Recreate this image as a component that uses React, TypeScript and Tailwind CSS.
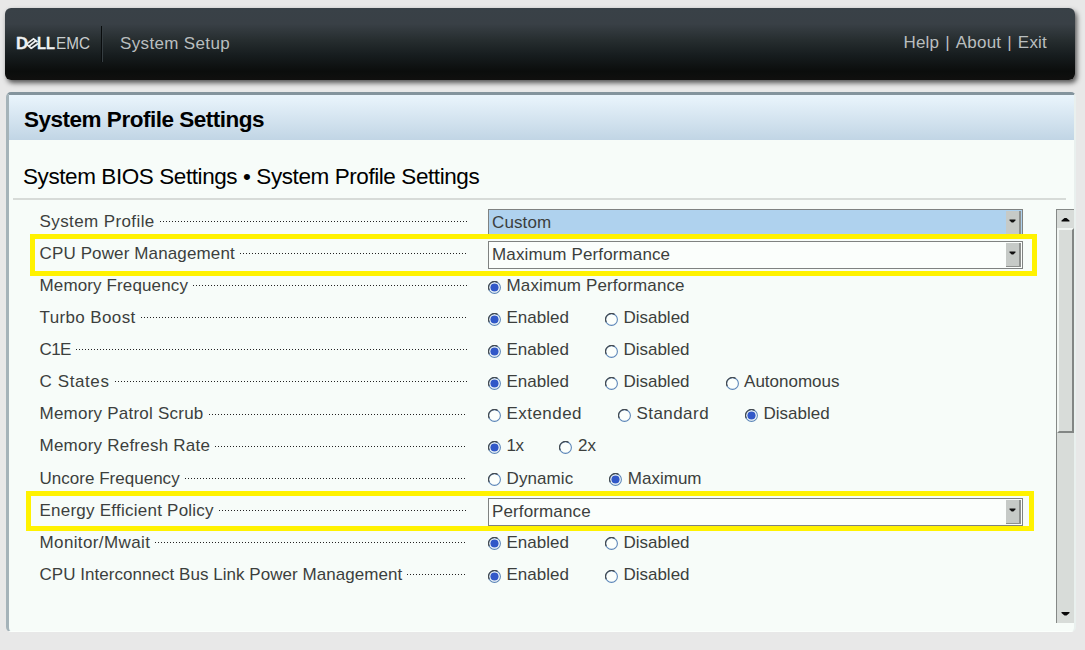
import React from "react";

type Option = { label: string; selected?: boolean; tracking?: string };
type Setting = { label: string; tracking?: string; value?: string; active?: boolean; options?: Option[] };

const on = (label: string, tracking = "tracking-[0px]"): Option => ({ label, selected: true, tracking });
const off = (label: string, tracking = "tracking-[0px]"): Option => ({ label, tracking });

const settings: Setting[] = [
  { label: "System Profile", tracking: "tracking-[0.4px]", value: "Custom", active: true },
  { label: "CPU Power Management", value: "Maximum Performance" },
  { label: "Memory Frequency", options: [on("Maximum Performance", "tracking-[0.13px]")] },
  { label: "Turbo Boost", tracking: "tracking-[0.38px]", options: [on("Enabled"), off("Disabled")] },
  { label: "C1E", tracking: "tracking-[-0.6px]", options: [on("Enabled"), off("Disabled")] },
  { label: "C States", tracking: "tracking-[0.6px]", options: [on("Enabled"), off("Disabled"), off("Autonomous")] },
  {
    label: "Memory Patrol Scrub",
    tracking: "tracking-[0.23px]",
    options: [off("Extended", "tracking-[0.45px]"), off("Standard", "tracking-[0.45px]"), on("Disabled")],
  },
  { label: "Memory Refresh Rate", tracking: "tracking-[0.23px]", options: [on("1x", "tracking-[-0.5px]"), off("2x")] },
  { label: "Uncore Frequency", tracking: "tracking-[0.02px]", options: [off("Dynamic", "tracking-[0.1px]"), on("Maximum")] },
  { label: "Energy Efficient Policy", tracking: "tracking-[0.24px]", value: "Performance" },
  { label: "Monitor/Mwait", tracking: "tracking-[0.38px]", options: [on("Enabled"), off("Disabled")] },
  {
    label: "CPU Interconnect Bus Link Power Management",
    tracking: "tracking-[0.04px]",
    options: [on("Enabled"), off("Disabled")],
  },
];

function Radio({ selected }: { selected?: boolean }) {
  return (
    <svg width="13" height="13" viewBox="0 0 13 13" className="mt-[3px] shrink-0">
      <circle cx="6.5" cy="6.5" r="5.9" fill="#fcfffc" stroke="#5c86b8" strokeWidth="1.1" />
      <path d="M1.3 9.2A5.9 5.9 0 0 1 9.6 1.4" fill="none" stroke="#454b50" strokeWidth="1.2" />
      {selected && <circle cx="6.5" cy="6.5" r="4.1" fill="#3158c8" />}
    </svg>
  );
}

function Select({ value, active }: { value: string; active?: boolean }) {
  return (
    <div className={"flex h-7 w-[535px] border border-[#7f8281] p-px " + (active ? "bg-[#afd2ee]" : "bg-[#fbfefc]")}>
      <span className="flex-1 pl-[2px] leading-[24px]">{value}</span>
      <span className="flex h-6 w-[15px] justify-center border-r-2 border-b border-[#8d908e] bg-[#c6cac7] pt-2">
        <svg width="7" height="5" viewBox="0 0 7 5">
          <path d="M0.5 0.5h6v1L4.3 3.5h-1.6L0.5 1.5z" fill="#111" />
        </svg>
      </span>
    </div>
  );
}

function SettingRow({ label, tracking, value, active, options }: Setting) {
  return (
    <div className="flex h-[32.1px] items-start">
      <div className="flex h-[25px] w-[428px] items-center pl-[0.5px]">
        <span className={"whitespace-nowrap " + (tracking ?? "")}>{label}</span>
        <span className="ml-[5px] h-px flex-1 bg-[repeating-linear-gradient(90deg,#222_0_1px,transparent_1px_3px)]" />
      </div>
      <div className="ml-[21px]">
        {value ? (
          <Select value={value} active={active} />
        ) : (
          <div className="flex h-[25px] items-center gap-[36px]">
            {options?.map((o) => (
              <span key={o.label} className={"flex items-center gap-[5.5px] whitespace-nowrap " + (o.tracking ?? "")}>
                <Radio selected={o.selected} />
                {o.label}
              </span>
            ))}
          </div>
        )}
      </div>
    </div>
  );
}

function Logo() {
  return (
    <svg width="75" height="20" viewBox="0 -3 75 20" fontFamily="Liberation Sans, sans-serif" fill="#eef1f1" className="tracking-normal">
      <text x="0" y="12" fontSize="16" fontWeight="700" textLength="12" lengthAdjust="spacingAndGlyphs" stroke="#eef1f1" strokeWidth=".3">D</text>
      <path d="M10.5 7.2 17.5 1.8 21.5 5M13 9.2 19.5 4M15 11.5 22 6.5M10.5 7.2 15.5 11.5" stroke="#eef1f1" strokeWidth="1.7" fill="none" />
      <text x="21" y="12" fontSize="16" fontWeight="700" textLength="18" lengthAdjust="spacingAndGlyphs" stroke="#eef1f1" strokeWidth=".3">LL</text>
      <text x="40" y="12" fontSize="16.5" textLength="34" lengthAdjust="spacingAndGlyphs" fill="#c9cecf">EMC</text>
    </svg>
  );
}

export default function App() {
  return (
    <div className="relative flex h-[650px] w-[1085px] flex-col overflow-hidden bg-[#e8e8e8] pt-2 pl-[5px] font-['Liberation_Sans',sans-serif] text-[17px] tracking-[0.13px] text-[#3c3f3d]">
      <header className="flex h-[72px] w-[1070px] shrink-0 items-center rounded-md bg-[linear-gradient(180deg,#394147_0%,#394046_22%,#262d2f_45%,#171d1f_65%,#0b0d0c_88%,#10100f_100%)] pr-7 pl-[11px] text-[#b9bebf] shadow-[2px_3px_5px_#555]">
        <Logo />
        <div className="ml-[10px] h-9 w-[2px] bg-[linear-gradient(90deg,#090c0d_50%,#353d41_50%)]" />
        <h1 className="ml-[17px] tracking-[0.35px]">System Setup</h1>
        <nav className="ml-auto flex gap-[6px] pb-[2px] tracking-[0.2px]">
          <span>Help</span><span>|</span><span>About</span><span>|</span><span>Exit</span>
        </nav>
      </header>

      <main className="mt-[12px] ml-[1px] flex h-[540px] w-[1070px] shrink-0 flex-col rounded-[5px] border-t-[3px] border-r-2 border-b border-l-[3px] border-t-[#84949d] border-r-[#e9f0ee] border-b-[#fbfffc] border-l-[#a5b3b9] bg-[#f7fcf9]">
        <h2 className="h-[45px] shrink-0 bg-[linear-gradient(180deg,#eaf5fc,#c1d5e5)] pl-[15px] text-[22.5px] leading-[50px] font-bold tracking-[-0.49px] text-black">
          System Profile Settings
        </h2>
        <h3 className="mr-2 ml-1 h-[60px] shrink-0 border-b-2 border-[#d7dbd8] pl-[10px] text-[22.5px] leading-[74px] tracking-[-0.42px] text-black">
          System BIOS Settings • System Profile Settings
        </h3>
        <div className="flex pt-[9px]">
          <section className="flex-1 pl-[30px]">
            {settings.map((s) => <SettingRow key={s.label} {...s} />)}
          </section>
          <aside className="flex h-[414px] w-[18px] flex-col items-center border-t border-l border-[#858987] bg-[#d8dcd9]">
            <svg width="9" height="18" viewBox="0 0 9 18" className="shrink-0">
              <path d="M0.5 11.5h8v-1L5.5 8h-2L0.5 10.5z" fill="#080808" />
            </svg>
            <div className="h-[205px] w-full border-2 border-t-[#f2f6f3] border-r-[#828684] border-b-[#828684] border-l-[#f2f6f3]" />
            <svg className="mt-auto mb-[6px]" width="9" height="6" viewBox="0 0 9 6">
              <path d="M0.5 1h8v1L5.5 4.5h-2L0.5 2z" fill="#080808" />
            </svg>
          </aside>
        </div>
      </main>
      <div className="absolute top-[234px] left-[30px] h-[42px] w-[1007px] border-[5px] border-[#fff200]" />
      <div className="absolute top-[491px] left-[26px] h-[40px] w-[1008px] border-[5px] border-[#fff200]" />
    </div>
  );
}
